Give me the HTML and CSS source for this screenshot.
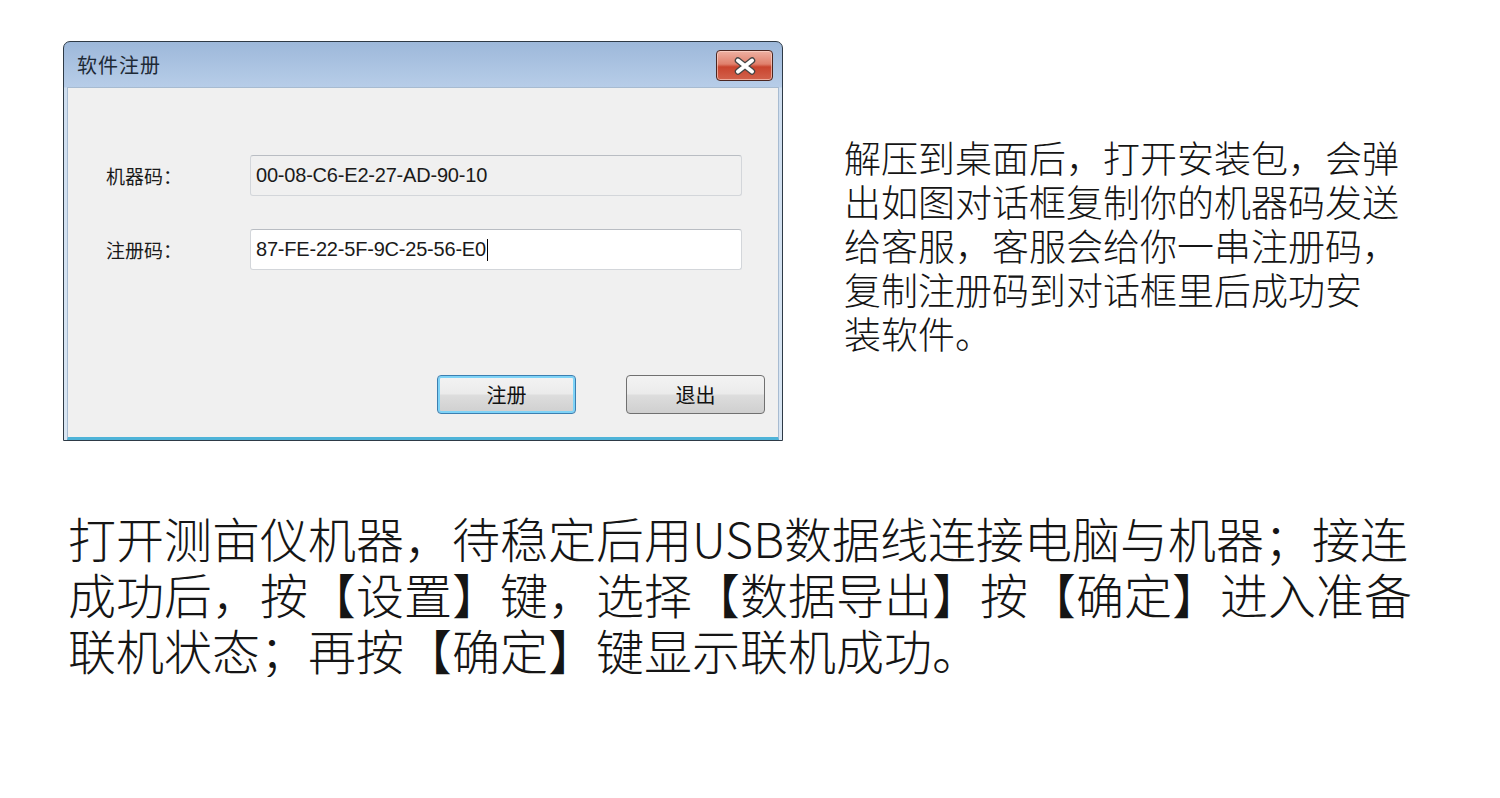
FILE: index.html
```html
<!DOCTYPE html>
<html lang="zh-CN">
<head>
  <meta charset="UTF-8" />
  <meta name="viewport" content="width=device-width, initial-scale=1.0"/>
  <title>软件注册</title>
  <link rel="stylesheet" href="styles.css">
</head>
<body>
  <div class="page">
    <div class="top">
      <!-- Register dialog -->
      <div class="window">
        <div class="titlebar">
          <span class="title">软件注册</span>
          <button class="close-btn" aria-label="关闭">
            <svg width="26" height="18" viewBox="0 0 26 18">
              <path d="M6 3.5 L20 14.5 M20 3.5 L6 14.5" stroke="#444444" stroke-width="6.5" stroke-linecap="round"/>
              <path d="M6 3.5 L20 14.5 M20 3.5 L6 14.5" stroke="#ffffff" stroke-width="4" stroke-linecap="round"/>
            </svg>
          </button>
        </div>
        <div class="client">
          <div class="form">
            <label class="field-label">机器码：</label>
            <div class="field readonly">00-08-C6-E2-27-AD-90-10</div>
            <label class="field-label">注册码：</label>
            <div class="field">87-FE-22-5F-9C-25-56-E0<span class="caret"></span></div>
          </div>
          <div class="actions">
            <button class="btn btn-default">注册</button>
            <button class="btn">退出</button>
          </div>
        </div>
      </div>

      <p class="note">
        解压到桌面后，打开安装包，会弹<br>
        出如图对话框复制你的机器码发送<br>
        给客服，客服会给你一串注册码，<br>
        复制注册码到对话框里后成功安<br>
        装软件。
      </p>
    </div>

    <p class="steps">
      打开测亩仪机器，待稳定后用USB数据线连接电脑与机器；接连<br>
      成功后，按【设置】键，选择【数据导出】按【确定】进入准备<br>
      联机状态；再按【确定】键显示联机成功。
    </p>
  </div>
</body>
</html>
```

FILE: styles.css
```css
body {
  margin: 0;
  background: #ffffff;
  font-family: "Noto Sans CJK SC", "Noto Sans", sans-serif;
  color: #111;
}

.page {
  padding: 41px 0 0 63px;
}

.top {
  display: flex;
  align-items: flex-start;
  gap: 61px;
}

/* dialog window */
.window {
  width: 720px;
  box-sizing: border-box;
  border: 1px solid #2e3a46;
  border-radius: 7px 7px 0 0;
  background: linear-gradient(#9db8da, #b7cde8 45px, #cfdeef 46px, #d9e6f3);
  padding: 0 3px;
  flex-shrink: 0;
}

.titlebar {
  height: 45px;
  display: flex;
  align-items: center;
  justify-content: space-between;
  padding: 0 6px 0 10px;
}

.title {
  font-size: 20px;
  color: #1e2a36;
  letter-spacing: 1px;
}

.close-btn {
  width: 57px;
  height: 31px;
  margin-top: 2px;
  border: 1px solid #4b2620;
  border-radius: 4px;
  background: linear-gradient(#eeb1a3, #e0806c 45%, #c9442e 55%, #d2624c);
  box-shadow: inset 0 0 0 1px rgba(255, 220, 210, 0.6);
  display: flex;
  align-items: center;
  justify-content: center;
  padding: 0;
}

.client {
  height: 349px;
  background: #f0f0f0;
  border: 1px solid #a7bbd1;
  border-bottom: 3px solid #4eb3d8;
}

.form {
  display: grid;
  grid-template-columns: 144px 492px;
  row-gap: 33px;
  align-items: center;
  padding: 67px 0 0 38px;
}

.field-label {
  font-size: 19px;
  color: #1a1a1a;
}

.field {
  height: 41px;
  box-sizing: border-box;
  border: 1px solid #d3d6da;
  border-top-color: #b9bdc3;
  border-radius: 3px;
  background: #ffffff;
  padding: 0 5px;
  display: flex;
  align-items: center;
  font-family: "Liberation Sans", sans-serif;
  font-size: 20px;
  letter-spacing: -0.2px;
  color: #1a1a1a;
}

.field.readonly {
  background: #f0f0f0;
}

.caret {
  display: inline-block;
  width: 1px;
  height: 22px;
  background: #000;
  margin-left: 1px;
}

.actions {
  display: flex;
  justify-content: flex-end;
  gap: 50px;
  margin-top: 105px;
  padding-right: 13px;
}

.btn {
  width: 139px;
  height: 39px;
  box-sizing: border-box;
  border: 1px solid #707070;
  border-radius: 4px;
  background: linear-gradient(#f3f3f3, #ebebeb 48%, #dddddd 52%, #cfcfcf);
  font-family: "Noto Sans CJK SC", sans-serif;
  font-size: 20px;
  color: #111;
  padding: 0;
}

.btn-default {
  border-color: #3c7fb1;
  box-shadow: inset 0 0 0 2px #7fd3f7;
}

/* text blocks */
.note {
  margin: 94px 0 0;
  font-size: 37px;
  font-weight: 300;
  line-height: 44px;
  color: #151515;
  white-space: nowrap;
}

.steps {
  margin: 68px 0 0 5px;
  font-size: 48px;
  font-weight: 300;
  line-height: 56px;
  color: #151515;
  white-space: nowrap;
}
```
